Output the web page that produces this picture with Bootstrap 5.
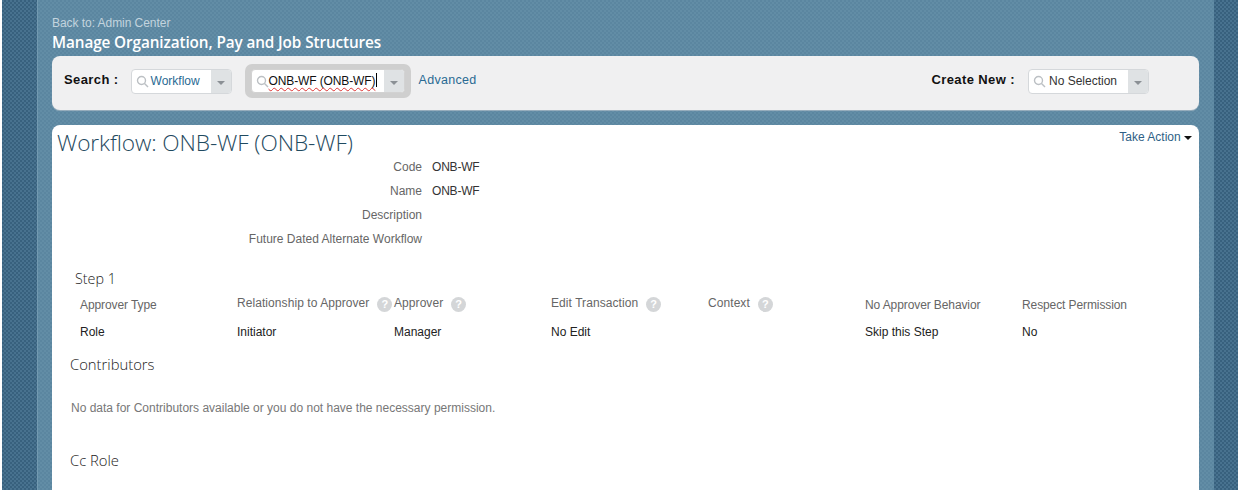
<!DOCTYPE html>
<html lang="en"><head><meta charset="utf-8"><title>Workflow</title>
<link href="https://cdn.jsdelivr.net/npm/bootstrap@5.3.0/dist/css/bootstrap.min.css" rel="stylesheet">
<style>
html,body{height:490px;overflow:hidden}
body{margin:0;padding-left:2px;background:#fff;font-family:"Liberation Sans",Arial,sans-serif;font-size:12px;color:#333}
.outer-bg{height:490px;overflow:hidden;padding:0 24px 0 35px;background-color:#406a87;background-image:conic-gradient(#38617e 25%,#48728f 0 50%,#38617e 0 75%,#48728f 0);background-size:4px 4px}
.shell{height:490px;overflow:hidden;padding:16px 15px 0 14px;background-color:#5f8aa3;background-image:conic-gradient(#5b86a0 25%,#628da6 0 50%,#5b86a0 0 75%,#628da6 0);background-size:4px 4px;border-left:1px solid #7299b0}
.back-link{color:#c3d4de;font-size:12px;line-height:14px;letter-spacing:-.05px}
.page-title{font-family:"Open Sans",sans-serif;font-weight:600;font-size:15.3px;line-height:24px;color:#fff;margin:0;height:26px;letter-spacing:-.1px;white-space:nowrap}
.search-bar{height:54px;background:#f0f0f1;border-radius:8px;box-shadow:0 1px 1px #9db1bf;padding:0 12px 4px;margin-bottom:15px}
.bar-label{font-weight:700;font-size:13px;color:#111;letter-spacing:.4px;white-space:pre;padding-bottom:2px}
.combo{height:25px;background:#fff;border:1px solid #d5d8db;border-radius:4px;overflow:hidden}
.combo-text{flex:1;padding-left:3px;font-size:12px;white-space:nowrap}
.combo-btn{width:20px;height:100%;background:#dfe2e4;position:relative}
.combo-btn::after{content:"";position:absolute;left:6px;top:11px;border:4px solid transparent;border-top-color:#8b9095;border-bottom:0}
.combo-a{width:101px;margin-left:12px}
.combo-a .combo-text{padding-left:2px}
.combo-b{width:154px;height:24px;border-color:#d2d2d2}
.combo-b .combo-text{padding-left:0}
.focus-wrap{padding:5px 6px;background:#cfcfcf;border-radius:7px;margin-left:13px}
.combo-c{width:121px;margin-left:13px;margin-right:38px}
.glass{margin-left:4px;flex:none}
.tx-link{color:#2a6a93}
.tx-dark{color:#333}
.typed{color:#111;font-size:12px;letter-spacing:-.12px;text-decoration:underline wavy #d33 1px;text-underline-offset:2px;text-decoration-skip-ink:none}
.caret-bar{display:inline-block;width:1px;height:14px;background:#000;vertical-align:-2px;margin-left:1px}
.adv-link{color:#2a6a93;margin-left:8px;font-size:12.5px;letter-spacing:.3px;text-decoration:none;padding-bottom:2px}
.main-card{background:#fff;border-radius:8px 8px 0 0;height:400px;padding:3px 7px 0 5px}
.work-title{font-family:"Open Sans",sans-serif;font-size:22.7px;font-weight:300;line-height:30px;color:#1f4a60;margin:0;letter-spacing:-.1px;white-space:nowrap}
.take-action{color:#2f5f86;text-decoration:none;line-height:14px;white-space:nowrap;margin-top:2px}
.take-caret{display:inline-block;border:4px solid transparent;border-top-color:#111;border-bottom:0;vertical-align:1px}
.meta-grid{display:grid;grid-template-columns:365px auto;column-gap:10px;justify-content:start;grid-auto-rows:24px;margin-top:-3px;align-items:center}
.meta-grid dt{font-weight:400;color:#666;text-align:right;margin:0}
.meta-grid dd{color:#333;margin:0;letter-spacing:-.2px}
.step-title{font-family:"Open Sans",sans-serif;font-size:14.3px;font-weight:300;line-height:18px;color:#222;margin:19px 0 0 18px}
.step-grid{display:grid;grid-template-columns:repeat(7,157px);margin:7px 0 0 23px;white-space:nowrap}
.head-cell{height:30px;color:#666;display:flex;align-items:flex-start;line-height:15px;padding-top:3px;letter-spacing:-.1px}
.head-up{padding-top:1px;letter-spacing:.07px}
.val-cell{color:#222;line-height:15px}
.help{display:inline-block;width:15px;height:15px;border-radius:50%;background:#d4d6d8;color:#fff;font-size:11px;line-height:15px;text-align:center;font-weight:700;margin-left:8px;flex:none;margin-top:1px}
.sec-title{font-family:"Open Sans",sans-serif;font-size:14.8px;line-height:20px;color:#222;margin:14px 0 0 13px;font-weight:300}
.no-data{color:#777;font-size:12px;line-height:14px;margin:27px 0 0 14px}
.sec-gap{margin-top:35px}
</style></head>
<body>
<div class="outer-bg"><div class="shell">
<div class="back-link">Back to: Admin Center</div>
<h1 class="page-title">Manage Organization, Pay and Job Structures</h1>
<div class="search-bar d-flex align-items-center">
 <span class="bar-label">Search :</span>
 <div class="combo combo-a d-flex align-items-center"><svg class="glass" width="13" height="13" viewBox="0 0 13 13" fill="none" stroke="#bcc0c4" stroke-width="1.4"><circle cx="5.5" cy="5.5" r="4"/><path d="M8.5 8.5 12 12"/></svg><span class="combo-text tx-link">Workflow</span><span class="combo-btn"></span></div>
 <div class="focus-wrap"><div class="combo combo-b d-flex align-items-center"><svg class="glass" width="13" height="13" viewBox="0 0 13 13" fill="none" stroke="#bcc0c4" stroke-width="1.4"><circle cx="5.5" cy="5.5" r="4"/><path d="M8.5 8.5 12 12"/></svg><span class="combo-text"><span class="typed">ONB-WF (ONB-WF)</span><span class="caret-bar"></span></span><span class="combo-btn"></span></div></div>
 <a class="adv-link" href="#">Advanced</a>
 <span class="bar-label ms-auto">Create New :</span>
 <div class="combo combo-c d-flex align-items-center"><svg class="glass" width="13" height="13" viewBox="0 0 13 13" fill="none" stroke="#bcc0c4" stroke-width="1.4"><circle cx="5.5" cy="5.5" r="4"/><path d="M8.5 8.5 12 12"/></svg><span class="combo-text tx-dark">No Selection</span><span class="combo-btn"></span></div>
</div>
<div class="main-card">
 <div class="d-flex justify-content-between align-items-start">
  <h2 class="work-title">Workflow: ONB-WF (ONB-WF)</h2>
  <a class="take-action" href="#">Take Action <span class="take-caret"></span></a>
 </div>
 <dl class="meta-grid mb-0">
  <dt>Code</dt><dd>ONB-WF</dd>
  <dt>Name</dt><dd>ONB-WF</dd>
  <dt>Description</dt><dd></dd>
  <dt>Future Dated Alternate Workflow</dt><dd></dd>
 </dl>
 <div class="step-title">Step 1</div>
 <div class="step-grid">
  <div class="head-cell">Approver Type</div>
  <div class="head-cell head-up">Relationship to Approver<span class="help">?</span></div>
  <div class="head-cell head-up">Approver<span class="help">?</span></div>
  <div class="head-cell head-up">Edit Transaction<span class="help">?</span></div>
  <div class="head-cell head-up">Context<span class="help">?</span></div>
  <div class="head-cell">No Approver Behavior</div>
  <div class="head-cell">Respect Permission</div>
  <div class="val-cell">Role</div><div class="val-cell">Initiator</div><div class="val-cell">Manager</div><div class="val-cell">No Edit</div><div class="val-cell"></div><div class="val-cell">Skip this Step</div><div class="val-cell">No</div>
 </div>
 <h3 class="sec-title">Contributors</h3>
 <p class="no-data mb-0">No data for Contributors available or you do not have the necessary permission.</p>
 <h3 class="sec-title sec-gap">Cc Role</h3>
</div>
</div></div>
</body></html>
